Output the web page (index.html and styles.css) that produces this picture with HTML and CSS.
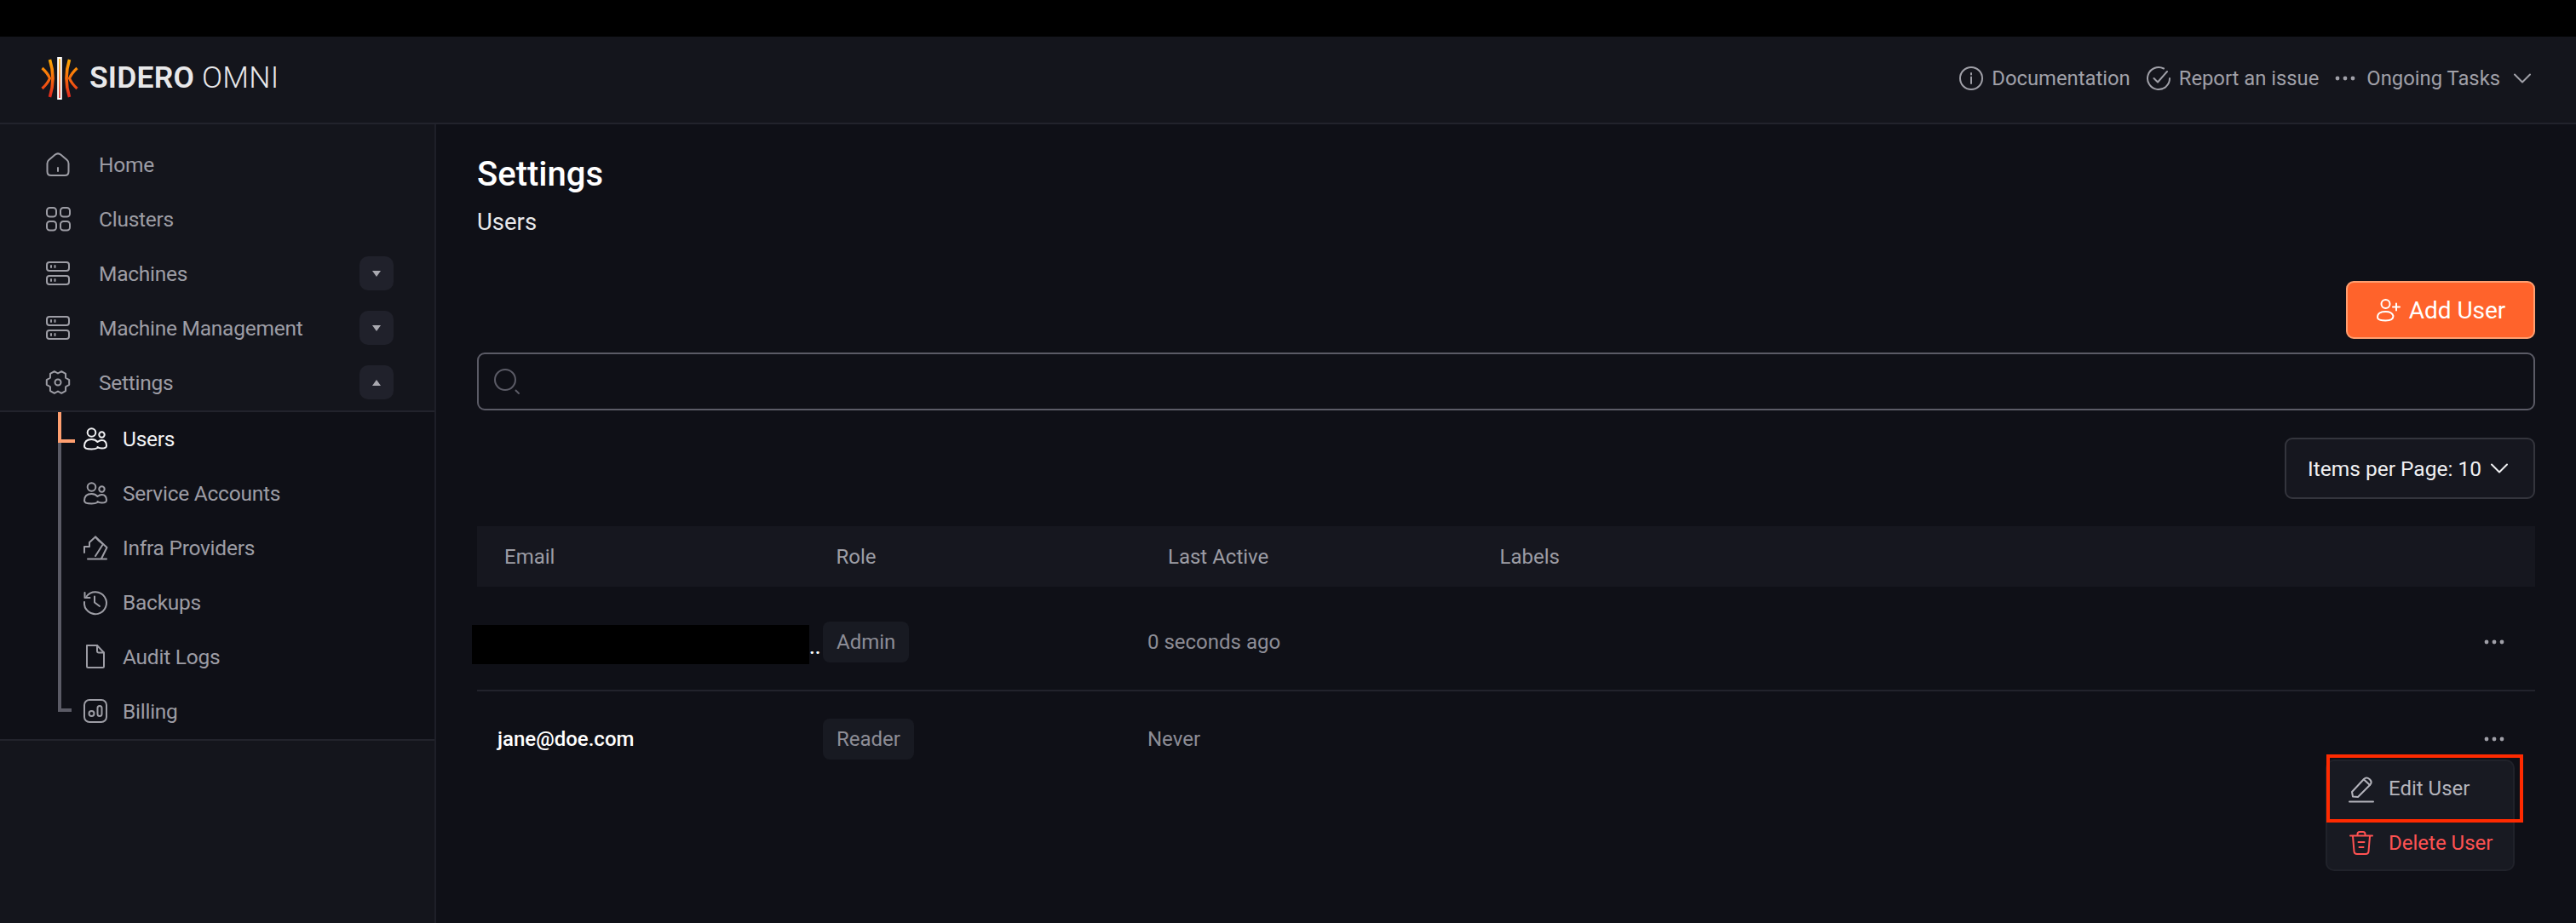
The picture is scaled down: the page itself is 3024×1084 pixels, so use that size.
FILE: index.html
```html
<!DOCTYPE html>
<html lang="en">
<head>
<meta charset="utf-8">
<title>Sidero Omni - Users</title>
<link rel="stylesheet" href="styles.css">
</head>
<body>
<div class="topstrip"></div>
<header class="header">
  <div class="brand">
    <svg class="logo" viewBox="0 0 44 48" fill="none">
      <defs>
        <linearGradient id="lg" x1="0" y1="0" x2="0" y2="48" gradientUnits="userSpaceOnUse">
          <stop offset="0" stop-color="#ffb000"/><stop offset=".5" stop-color="#f76a0c"/><stop offset="1" stop-color="#e0201f"/>
        </linearGradient>
      </defs>
      <path d="M20.200 0H23.800V48H20.200Z" fill="url(#lg)"/>
      <path d="M10.500 2Q17.500 24 10.500 46" stroke="url(#lg)" stroke-width="3.600"/>
      <path d="M33.500 2Q26.500 24 33.500 46" stroke="url(#lg)" stroke-width="3.600"/>
      <path d="M1.500 12Q8 18 10.500 24Q8 30 1.500 36" stroke="url(#lg)" stroke-width="3.200"/>
      <path d="M42.500 12Q36 18 33.500 24Q36 30 42.500 36" stroke="url(#lg)" stroke-width="3.200"/>
    </svg>
    <span class="wordmark"><b>SIDERO</b> OMNI</span>
  </div>
  <nav class="toplinks">
    <a class="toplink"><svg class="ico28" viewBox="0 0 28 28"><circle cx="14" cy="14" r="13"/><path d="M14 12.500V20M14 8V9.500"/></svg>Documentation</a>
    <a class="toplink"><svg class="ico28" viewBox="0 0 28 28"><path d="M20 2.500A13 13 0 1 0 27 14"/><path d="M8.500 14L13 18.500L24 6"/></svg>Report an issue</a>
    <a class="toplink tasks"><svg class="dots24" viewBox="0 0 24 6"><circle cx="3" cy="3" r="2.400"/><circle cx="12" cy="3" r="2.400"/><circle cx="21" cy="3" r="2.400"/></svg>Ongoing Tasks<svg class="chev" viewBox="0 0 20 12"><path d="M1 1.500L10 10.500L19 1.500"/></svg></a>
  </nav>
</header>
<div class="shell">
  <aside class="sidebar">
    <ul class="menu">
      <li class="item"><svg class="ico28" viewBox="0 0 28 28"><path d="M1.500 13Q1.500 10.500 3.500 8.800L10.500 2.800Q14 0 17.500 2.800L24.500 8.800Q26.500 10.500 26.500 13V22.500Q26.500 27 22 27H6Q1.500 27 1.500 22.500Z"/><path d="M14 18V22"/></svg><span>Home</span></li>
      <li class="item"><svg class="ico28" viewBox="0 0 28 28"><rect x="1" y="1" width="11" height="10.500" rx="3.500"/><rect x="17" y="1" width="11" height="10.500" rx="3.500"/><rect x="1" y="17" width="11" height="10.500" rx="3.500"/><rect x="17" y="17" width="11" height="10.500" rx="3.500"/></svg><span>Clusters</span></li>
      <li class="item"><svg class="ico28" viewBox="0 0 28 28"><rect x="1" y="1" width="26" height="10" rx="3"/><rect x="1" y="17" width="26" height="10" rx="3"/><path d="M6 5V7M10.500 5V7M6 21V23M10.500 21V23"/></svg><span>Machines</span><button class="toggle"><i class="tri down"></i></button></li>
      <li class="item"><svg class="ico28" viewBox="0 0 28 28"><rect x="1" y="1" width="26" height="10" rx="3"/><rect x="1" y="17" width="26" height="10" rx="3"/><path d="M6 5V7M10.500 5V7M6 21V23M10.500 21V23"/></svg><span>Machine Management</span><button class="toggle"><i class="tri down"></i></button></li>
      <li class="item"><svg class="ico28" viewBox="0 0 28 28"><path d="M27.200 16.800L27.200 11.200L23.100 8.750L23.030 3.970L18.170 1.160L14 3.500L9.830 1.160L4.970 3.970L4.900 8.750L.8 11.200L.8 16.800L4.900 19.250L4.970 24.030L9.830 26.840L14 24.500L18.170 26.840L23.030 24.030L23.100 19.250Z"/><circle cx="14" cy="14" r="3.500"/></svg><span>Settings</span><button class="toggle"><i class="tri up"></i></button></li>
    </ul>
    <ul class="submenu">
      <li class="tree"></li>
      <li class="subitem active"><svg class="ico28" viewBox="0 0 28 28"><circle cx="9.500" cy="7" r="4.800"/><circle cx="21.500" cy="9.500" r="3.200"/><path d="M1 23Q1 15 9.500 15Q14 15 16.500 18M1 23Q1 26.500 9.500 26.500Q14 26.500 16.500 25M16.500 18Q19 16 21.500 16Q27 16 27 22.500Q27 25.500 21.500 25.500Q18 25.500 16.500 24"/></svg><span>Users</span></li>
      <li class="subitem"><svg class="ico28" viewBox="0 0 28 28"><circle cx="9.500" cy="7" r="4.800"/><circle cx="21.500" cy="9.500" r="3.200"/><path d="M1 23Q1 15 9.500 15Q14 15 16.500 18M1 23Q1 26.500 9.500 26.500Q14 26.500 16.500 25M16.500 18Q19 16 21.500 16Q27 16 27 22.500Q27 25.500 21.500 25.500Q18 25.500 16.500 24"/></svg><span>Service Accounts</span></li>
      <li class="subitem"><svg class="ico28" viewBox="0 0 28 28"><path d="M1 20V13H7M7 13V8L14 1.500L27.500 14L21 27"/><path d="M14 1.500L18 6L23 10L14 24"/><path d="M5 27.500H27"/></svg><span>Infra Providers</span></li>
      <li class="subitem"><svg class="ico28" viewBox="0 0 28 28"><path d="M3.500 7.500A13 13 0 1 1 1 14"/><path d="M1.500 3V9H7.500"/><path d="M13 7.500V14.500L19 19"/></svg><span>Backups</span></li>
      <li class="subitem"><svg class="ico28" viewBox="0 0 28 28"><path d="M4 1H16L24 9.500V25.500Q24 27 22.500 27H5.500Q4 27 4 25.500Z"/><path d="M16 1V7.500Q16 9.500 18 9.500H24"/></svg><span>Audit Logs</span></li>
      <li class="subitem"><svg class="ico28" viewBox="0 0 28 28"><rect x="1" y="1" width="26" height="26" rx="6"/><circle cx="9.500" cy="17" r="3"/><rect x="16.500" y="8" width="5" height="12" rx="2.500"/></svg><span>Billing</span></li>
    </ul>
  </aside>
  <main class="content">
    <h1 class="title">Settings</h1>
    <p class="subtitle">Users</p>
    <div class="actions">
      <button class="add"><svg class="ico28" viewBox="0 0 28 28"><circle cx="11.500" cy="7" r="5"/><path d="M2 22.500Q2 16 11.500 16Q19 16 20.500 21Q20.500 26.500 11.500 26.500Q2 26.500 2 22.500Z"/><path d="M20 10.500H28M24 6.500V14.500"/></svg>Add User</button>
    </div>
    <div class="search"><svg class="searchico" viewBox="0 0 30 30"><circle cx="13" cy="13" r="12"/><path d="M25.500 25.500L29 29"/></svg></div>
    <div class="pager">
      <button class="perpage">Items per Page: 10<svg class="chev" viewBox="0 0 20 12"><path d="M1 1.500L10 10.500L19 1.500"/></svg></button>
    </div>
    <div class="thead">
      <span>Email</span><span>Role</span><span>Last Active</span><span>Labels</span>
    </div>
    <div class="row first">
      <span class="email">
        <span class="redact"></span>
        <span class="trunc">..</span>
      </span>
      <span><em class="chip">Admin</em></span>
      <span class="when">0 seconds ago</span>
      <svg class="more" viewBox="0 0 24 6"><circle cx="3" cy="3" r="2.400"/><circle cx="12" cy="3" r="2.400"/><circle cx="21" cy="3" r="2.400"/></svg>
    </div>
    <div class="row second">
      <span class="email">jane@doe.com</span>
      <span><em class="chip">Reader</em></span>
      <span class="when">Never</span>
      <svg class="more" viewBox="0 0 24 6"><circle cx="3" cy="3" r="2.400"/><circle cx="12" cy="3" r="2.400"/><circle cx="21" cy="3" r="2.400"/></svg>
      <div class="dropdown">
        <div class="dd edit"><svg class="ico28" viewBox="0 0 28 28"><path d="M4 23.500L3 18L17 3Q20 0 23.500 3L24.500 4Q27 7 24 10L10 24Z"/><path d="M17 3.500L24 10"/><path d="M0 29.500H28"/></svg>Edit User</div>
        <div class="dd del"><svg class="ico28" viewBox="0 0 28 28"><path d="M1 5.500H27"/><path d="M9.500 5V3.500Q9.500 1 12 1H16Q18.500 1 18.500 3.500V5"/><path d="M4 6L5.500 24Q5.700 27 9 27H19Q22.300 27 22.500 24L24 6"/><path d="M10.500 13H17.500M11.500 19H16.500"/></svg>Delete User</div>
        <div class="annot"></div>
      </div>
    </div>
  </main>
</div>
</body>
</html>
```
FILE: styles.css
```css
* { box-sizing: border-box; }
html, body { margin: 0; height: 100%; overflow: hidden; }
body { background: #0f1017; color: #fff; font-family: Roboto, "Liberation Sans", sans-serif; display: flex; flex-direction: column; }
ul { list-style: none; margin: 0; padding: 0; }
button { font-family: inherit; }
svg { flex: none; fill: none; stroke: currentColor; stroke-width: 2; stroke-linecap: round; stroke-linejoin: round; overflow: visible; }
.ico28 { width: 28px; height: 28px; }

.topstrip { height: 43px; background: #000; flex: none; }
.header { height: 103px; flex: none; background: #14151c; border-bottom: 2px solid #22232c; display: flex; align-items: center; justify-content: space-between; padding: 0 53px 3px 48px; }
.brand { display: flex; align-items: center; gap: 13px; }
.logo { width: 44px; height: 48px; stroke-linecap: butt; stroke-linejoin: miter; }
.wordmark { font-size: 35.500px; font-weight: 300; color: #e8e8ea; letter-spacing: .2px; line-height: 1; }
.wordmark b { font-weight: 600; }
.toplinks { display: flex; align-items: center; gap: 19px; color: #a0a0a8; font-size: 23.800px; }
.toplink { display: flex; align-items: center; gap: 10px; }
.toplink.tasks { gap: 13px; }
.toplink.tasks .chev { margin-left: 3px; }
.dots24 { width: 24px; height: 6px; fill: currentColor; stroke: none; }
.chev { width: 20px; height: 12px; stroke-width: 2; }

.shell { flex: 1; display: flex; min-height: 0; }
.sidebar { width: 512px; flex: none; background: #14151c; border-right: 2px solid #1e1f28; }
.menu { padding: 15px 0 1px; border-bottom: 2px solid #22232c; }
.item { height: 64px; display: flex; align-items: center; padding-left: 54px; color: #9d9da5; font-size: 24.500px; letter-spacing: -.25px; }
.item span { margin-left: 34px; flex: 1; }
.toggle { width: 40px; height: 40px; margin-right: 48px; border: 0; border-radius: 10px; background: #20212b; display: flex; align-items: center; justify-content: center; padding: 0; }
.tri { display: block; width: 0; height: 0; border-left: 5.500px solid transparent; border-right: 5.500px solid transparent; color: #a9a9b0; }
.tri.down { border-top: 7px solid currentColor; }
.tri.up { border-bottom: 7px solid currentColor; }
.submenu { position: relative; background: #0f1017; height: 386px; border-bottom: 2px solid #22232c; }
.tree { position: absolute; left: 68px; top: 0; width: 16px; height: 352px; border-left: 4px solid #5b5b66; border-bottom: 4px solid #5b5b66; }
.tree::before { content: ""; position: absolute; left: -4px; top: 0; width: 16px; height: 32px; border-left: 4px solid #ff9f70; border-bottom: 4px solid #ff9f70; }
.subitem { height: 64px; display: flex; align-items: center; padding: 0 0 2px 98px; color: #9d9da5; font-size: 24.500px; letter-spacing: -.25px; }
.subitem span { margin-left: 18px; }
.subitem.active { color: #f2f2f4; }

.content { flex: 1; padding: 36px 48px 0; min-width: 0; }
.title { margin: 0; font-size: 40px; font-weight: 500; line-height: 46px; color: #fff; }
.subtitle { margin: 17px 0 0; font-size: 27.500px; line-height: 32px; color: #e8e8ea; }
.actions { display: flex; justify-content: flex-end; margin-top: 53px; }
.add { width: 222px; height: 68px; background: #ff632b; border: 2px solid #ff9f70; border-radius: 9px; color: #fff; font-size: 28px; display: flex; align-items: center; justify-content: center; gap: 11px; padding: 0; }
.search { height: 68px; margin-top: 16px; border: 2px solid #5b5b66; border-radius: 9px; display: flex; align-items: center; padding-left: 18px; color: #5b5b66; }
.searchico { width: 30px; height: 30px; }
.pager { display: flex; justify-content: flex-end; margin-top: 32px; }
.perpage { width: 294px; height: 72px; background: #16171f; border: 2px solid #34353d; border-radius: 9px; color: #f0f0f2; font-size: 24.500px; white-space: nowrap; display: flex; align-items: center; justify-content: space-between; padding: 0 30px 0 25px; }
.thead { margin-top: 32px; height: 71px; background: #16171f; display: grid; grid-template-columns: 389.500px 389.500px 389.500px 1fr; align-items: center; padding-left: 32px; color: #9d9da5; font-size: 24px; }
.row { display: grid; grid-template-columns: 382px 381px 1fr auto; align-items: center; padding-left: 24px; padding-right: 36px; color: #8d8d96; font-size: 24px; position: relative; }
.row.first { height: 123px; padding-top: 9px; border-bottom: 2px solid #22232c; }
.row.second { height: 112px; }
.email { position: relative; color: #fff; font-weight: 500; font-size: 24px; display: block; }
.redact { position: absolute; left: -30px; top: -20px; width: 396px; height: 46px; background: #000; }
.trunc { position: absolute; left: 366px; top: -8px; }
.chip { display: inline-block; font-style: normal; background: #181a22; border-radius: 8px; height: 48px; line-height: 48px; padding: 0 16px; color: #8d8d96; }
.more { width: 24px; height: 6px; fill: #a0a0a8; stroke: none; }
.dropdown { position: absolute; left: 2170px; top: 80px; width: 222px; height: 131px; background: #181a22; border: 2px solid #20222a; border-radius: 10px; }
.dd { height: 64px; display: flex; align-items: center; gap: 18px; padding-left: 26px; font-size: 24px; color: #b4b4bc; }
.dd.del { color: #ff5252; }
.annot { position: absolute; left: -1px; top: -8px; width: 231px; height: 80px; border: 4px solid #ff2a00; }
```
